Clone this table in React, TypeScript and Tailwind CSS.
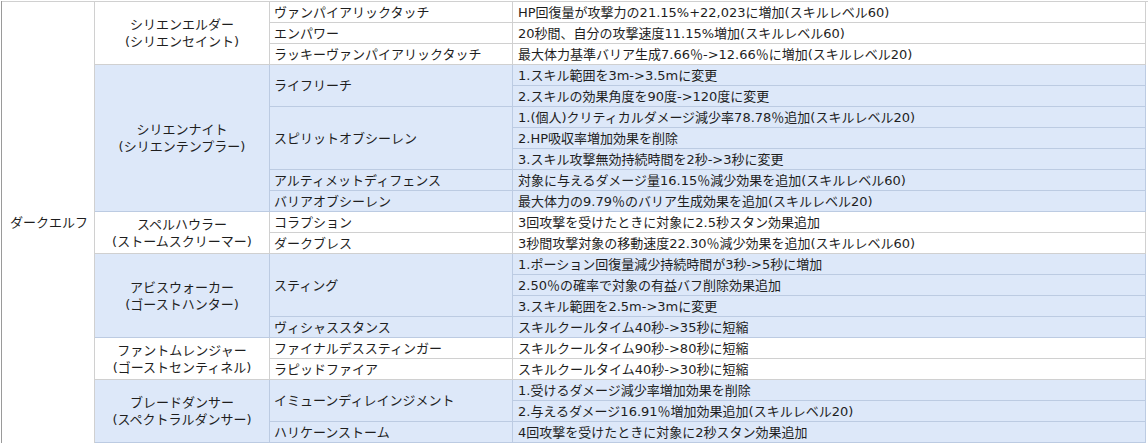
import React from "react";

type Skill = { name: string; effects: string[] };
type Group = { name: string; sub: string; blue: boolean; skills: Skill[] };

const groups: Group[] = [
  {
    name: "シリエンエルダー",
    sub: "(シリエンセイント)",
    blue: false,
    skills: [
      { name: "ヴァンパイアリックタッチ", effects: ["HP回復量が攻撃力の21.15%+22,023に増加(スキルレベル60)"] },
      { name: "エンパワー", effects: ["20秒間、自分の攻撃速度11.15%増加(スキルレベル60)"] },
      { name: "ラッキーヴァンパイアリックタッチ", effects: ["最大体力基準バリア生成7.66％->12.66％に増加(スキルレベル20)"] },
    ],
  },
  {
    name: "シリエンナイト",
    sub: "(シリエンテンプラー)",
    blue: true,
    skills: [
      { name: "ライフリーチ", effects: ["1.スキル範囲を3m->3.5mに変更", "2.スキルの効果角度を90度->120度に変更"] },
      {
        name: "スピリットオブシーレン",
        effects: [
          "1.(個人)クリティカルダメージ減少率78.78％追加(スキルレベル20)",
          "2.HP吸収率増加効果を削除",
          "3.スキル攻撃無効持続時間を2秒->3秒に変更",
        ],
      },
      { name: "アルティメットディフェンス", effects: ["対象に与えるダメージ量16.15％減少効果を追加(スキルレベル60)"] },
      { name: "バリアオブシーレン", effects: ["最大体力の9.79％のバリア生成効果を追加(スキルレベル20)"] },
    ],
  },
  {
    name: "スペルハウラー",
    sub: "(ストームスクリーマー)",
    blue: false,
    skills: [
      { name: "コラプション", effects: ["3回攻撃を受けたときに対象に2.5秒スタン効果追加"] },
      { name: "ダークブレス", effects: ["3秒間攻撃対象の移動速度22.30％減少効果を追加(スキルレベル60)"] },
    ],
  },
  {
    name: "アビスウォーカー",
    sub: "(ゴーストハンター)",
    blue: true,
    skills: [
      {
        name: "スティング",
        effects: [
          "1.ポーション回復量減少持続時間が3秒->5秒に増加",
          "2.50％の確率で対象の有益バフ削除効果追加",
          "3.スキル範囲を2.5m->3mに変更",
        ],
      },
      { name: "ヴィシャススタンス", effects: ["スキルクールタイム40秒->35秒に短縮"] },
    ],
  },
  {
    name: "ファントムレンジャー",
    sub: "(ゴーストセンティネル)",
    blue: false,
    skills: [
      { name: "ファイナルデススティンガー", effects: ["スキルクールタイム90秒->80秒に短縮"] },
      { name: "ラピッドファイア", effects: ["スキルクールタイム40秒->30秒に短縮"] },
    ],
  },
  {
    name: "ブレードダンサー",
    sub: "(スペクトラルダンサー)",
    blue: true,
    skills: [
      {
        name: "イミューンディレインジメント",
        effects: ["1.受けるダメージ減少率増加効果を削除", "2.与えるダメージ16.91％増加効果追加(スキルレベル20)"],
      },
      { name: "ハリケーンストーム", effects: ["4回攻撃を受けたときに対象に2秒スタン効果追加"] },
    ],
  },
];

export default function App() {
  return (
    <div
      className="w-[1148px] h-[443px] overflow-hidden bg-white text-[13px] leading-[17px] text-[#1e1e1e]"
      style={{ fontFamily: '"DejaVu Sans", "Noto Sans CJK JP", sans-serif' }}
    >
      <div className="ml-[1px] border-l border-[#9a9a9a]">
        <div className="mt-[1px] flex border-t border-[#d0d0d0]">
          {/* race column */}
          <div className="flex w-[93px] shrink-0 items-center border-r border-[#d0d0d0] pl-[8px]">
            ダークエルフ
          </div>

          <div className="flex w-[1051px] flex-col">
            {groups.map((g) => {
              const bg = g.blue ? "bg-[#dde8f9]" : "bg-white";
              const line = g.blue ? "border-[#bccbe2]" : "border-[#d0d0d0]";
              return (
                <div key={g.name} className="flex">
                  <div
                    className={`flex w-[175px] shrink-0 flex-col items-center justify-center border-r border-b text-center ${bg} ${line}`}
                  >
                    <span>{g.name}</span>
                    <span>{g.sub}</span>
                  </div>
                  <div className="flex flex-1 flex-col">
                    {g.skills.map((s) => (
                      <div key={s.name} className="flex">
                        <div
                          className={`flex w-[243px] shrink-0 items-center border-r border-b pl-[4px] ${bg} ${line}`}
                        >
                          {s.name}
                        </div>
                        <div className="flex flex-1 flex-col">
                          {s.effects.map((e) => (
                            <div
                              key={e}
                              className={`flex h-[21px] items-center whitespace-nowrap border-r border-b pl-[5px] ${bg} ${line}`}
                            >
                              {e}
                            </div>
                          ))}
                        </div>
                      </div>
                    ))}
                  </div>
                </div>
              );
            })}
          </div>
        </div>
      </div>
    </div>
  );
}
